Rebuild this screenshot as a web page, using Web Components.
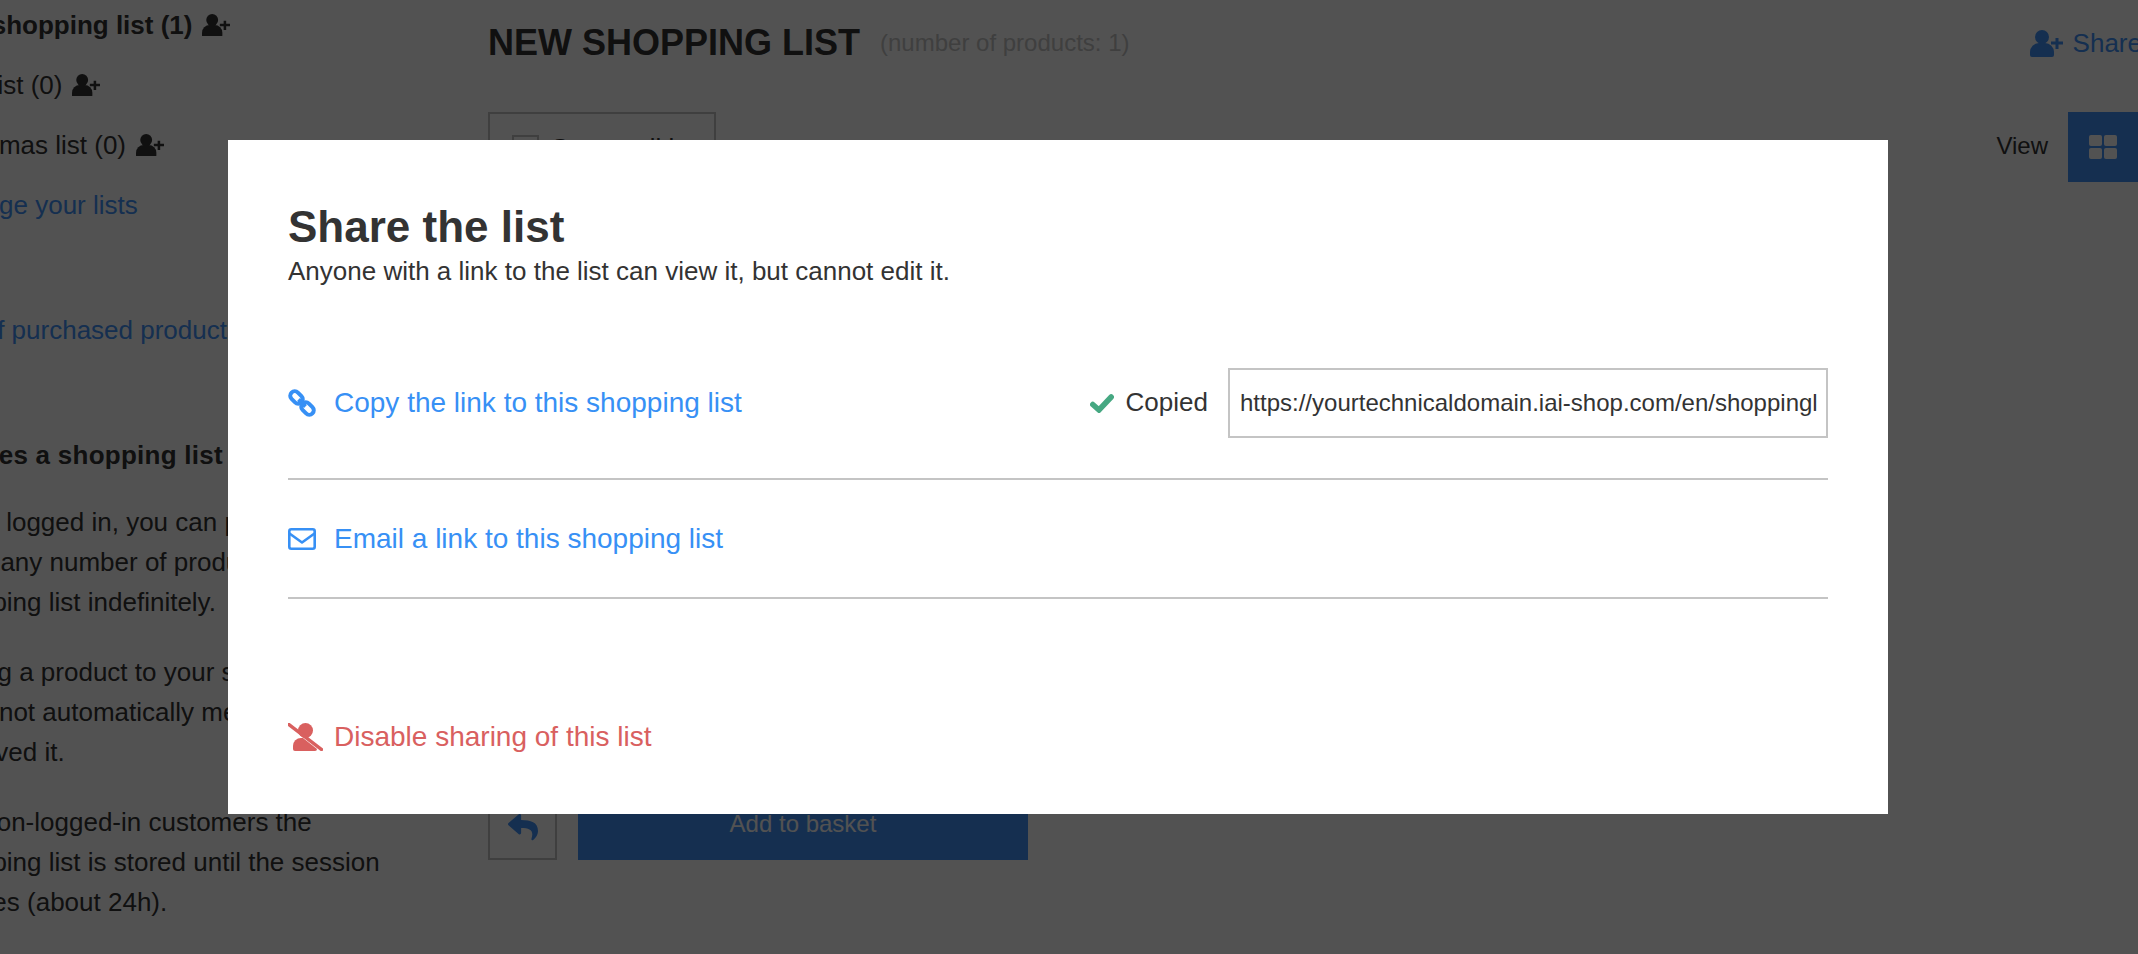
<!DOCTYPE html>
<html lang="en">
<head>
<meta charset="utf-8">
<title>Share the list</title>
<style>
  html, body { margin: 0; height: 100%; overflow: hidden; background: #fff; }
  body {
    display: flex;
    margin-top: -5px;
    height: 959px;
    font-family: "Liberation Sans", Arial, sans-serif;
    font-size: 24px;
    color: #333;
  }
</style>
</head>
<body>
<list-sidebar></list-sidebar>
<list-main></list-main>
<share-dialog>
  <share-action slot="copy" icon="link">Copy the link to this shopping list</share-action>
  <share-action slot="email" icon="mail">Email a link to this shopping list</share-action>
  <share-action slot="disable" icon="unshare" tone="danger">Disable sharing of this list</share-action>
</share-dialog>

<script>
const ICONS = {
  userPlus: `<svg viewBox="0 0 33 27" width="33" height="27"><circle cx="12" cy="7" r="7"/><path d="M0 25v-3a9 9 0 0 1 9-9h6a9 9 0 0 1 9 9v3a2 2 0 0 1-2 2H2a2 2 0 0 1-2-2z"/><path d="M25.500 8h3v3.500H33v3h-4.500V19h-3v-4.500H21v-3h4.500z"/></svg>`,
  link: `<svg viewBox="0 0 28 28" width="28" height="28" fill="none" stroke="currentColor" stroke-width="4"><rect x="1.500" y="4" width="14" height="9" rx="4.500" transform="rotate(45 8.500 8.500)"/><rect x="12.500" y="15" width="14" height="9" rx="4.500" transform="rotate(45 19.500 19.500)"/><path d="M10.500 10.500l7 7"/></svg>`,
  mail: `<svg viewBox="0 0 28 22" width="28" height="22" fill="none" stroke="currentColor" stroke-width="2.600" stroke-linejoin="round"><rect x="1.300" y="1.300" width="25.400" height="19.400" rx="2"/><path d="M1.500 5.500L14 14.500l12.500-9"/></svg>`,
  unshare: `<svg viewBox="0 0 35 28" width="35" height="28"><circle cx="17.500" cy="7.500" r="7.500"/><path d="M5 26v-3a8 8 0 0 1 8-8h2L29 26a2 2 0 0 1-2 2H7a2 2 0 0 1-2-2z"/><path d="M1 1.500L33.500 26.500" stroke="currentColor" stroke-width="3.400" stroke-linecap="square"/></svg>`,
  check: `<svg viewBox="0 0 24 19" width="24" height="19" fill="none" stroke="currentColor" stroke-width="5.500" stroke-linecap="round"><path d="M2.800 10.500L9 16 21.200 3"/></svg>`,
  reply: `<svg viewBox="0 0 512 512" width="30" height="30"><path d="M8.309 189.836L184.313 37.851C199.719 24.546 224 35.347 224 56.015v80.053c160.629 1.839 288 34.032 288 186.258 0 61.441-39.581 122.309-83.333 154.132-13.653 9.931-33.111-2.533-28.077-18.631 45.344-145.012-21.507-183.51-176.59-185.742V360c0 20.700-24.300 31.453-39.687 18.164l-176.004-152c-11.071-9.562-11.086-26.753 0-36.328z"/></svg>`
};

class UiIcon extends HTMLElement {
  constructor() {
    super();
    this.attachShadow({ mode: "open" });
    const name = this.getAttribute("name");
    this.shadowRoot.innerHTML = `
      <style>
        :host { display: inline-flex; flex: none; color: inherit; }
        svg { display: block; fill: currentColor; }
        svg[fill="none"] { fill: none; }
      </style>
      ${ICONS[name]}
    `;
    // optional smaller variant, keeps the ratio of the viewBox
    const width = this.getAttribute("width");
    if (width) {
      const svg = this.shadowRoot.querySelector("svg");
      const box = svg.viewBox.baseVal;
      svg.setAttribute("width", width);
      svg.setAttribute("height", width * box.height / box.width);
    }
  }
}
customElements.define("ui-icon", UiIcon);

class ListSidebar extends HTMLElement {
  constructor() {
    super();
    this.attachShadow({ mode: "open" });
    this.shadowRoot.innerHTML = `
      <style>
        :host {
          display: block;
          flex: none;
          width: 557px;
          margin-left: -69px;
          font-size: 26px;
          line-height: 40px;
          white-space: nowrap;
          color: #333;
        }
        .lists div { display: flex; align-items: center; gap: 10px; height: 60px; }
        .lists .active { font-weight: bold; }
        .lists ui-icon { color: #333; }
        a { color: #4292f8; text-decoration: none; display: block; }
        .manage { height: 60px; line-height: 60px; padding-left: 3px; }
        .bought { margin-top: 65px; height: 60px; line-height: 60px; padding-left: 4px; }
        h3 { font-size: 26px; margin: 0; margin-top: 75px; letter-spacing: .25px; line-height: 40px; color: #333; }
        p { margin: 0; margin-top: 30px; }
        h3 + p { margin-top: 27px; }
        p span { display: block; }
        p span.nudge, p.nudge span { padding-left: 5px; }
      </style>
      <div class="lists">
        <div class="active">New shopping list (1) <ui-icon name="userPlus" width="28"></ui-icon></div>
        <div>Toys list (0) <ui-icon name="userPlus" width="28"></ui-icon></div>
        <div>Christmas list (0) <ui-icon name="userPlus" width="28"></ui-icon></div>
      </div>
      <a class="manage">Manage your lists</a>
      <a class="bought">List of purchased products</a>
      <h3>Creates a shopping list</h3>
      <p>
        <span>When logged in, you can plan</span>
        <span>place any number of products</span>
        <span class="nudge">shopping list indefinitely.</span>
      </p>
      <p>
        <span>Adding a product to your shopping</span>
        <span>Does not automatically mean you</span>
        <span class="nudge">reserved it.</span>
      </p>
      <p class="nudge">
        <span>For non-logged-in customers the</span>
        <span>shopping list is stored until the session</span>
        <span>expires (about 24h).</span>
      </p>
    `;
  }
}
customElements.define("list-sidebar", ListSidebar);

class ListMain extends HTMLElement {
  constructor() {
    super();
    this.attachShadow({ mode: "open" });
    this.shadowRoot.innerHTML = `
      <style>
        :host {
          display: flex;
          flex-direction: column;
          flex: none;
          width: 1650px;
          padding-top: 26px;
          box-sizing: border-box;
          color: #333;
        }
        header { display: flex; align-items: center; height: 44px; }
        h1 { margin: 0; font-size: 36px; line-height: 44px; text-transform: uppercase; }
        .count { margin-left: 20px; color: #c4c4c4; }
        .share {
          display: flex;
          align-items: center;
          gap: 10px;
          margin-left: auto;
          margin-right: -4px;
          font-size: 26px;
          color: #4292f8;
        }
        .filters { display: flex; align-items: flex-start; margin-top: 47px; height: 70px; }
        .select {
          display: flex;
          gap: 11px;
          box-sizing: border-box;
          width: 228px;
          height: 70px;
          padding: 21px 22px;
          border: 2px solid #c4c4c4;
          font-size: 26px;
        }
        .select span:last-child { margin-top: -2px; }
        .check { width: 27px; height: 27px; box-sizing: border-box; border: 2px solid #c4c4c4; flex: none; }
        .view { display: flex; align-items: center; gap: 20px; margin-left: auto; }
        .view span { position: relative; top: -1px; }
        .grid {
          display: grid;
          place-content: center;
          grid-template: 11px 11px / 13px 13px;
          gap: 2px;
          width: 70px;
          height: 70px;
          background: #4292f8;
        }
        .grid i { background: #fff; border-radius: 2px; }
        .actions { display: flex; gap: 21px; margin-top: 608px; }
        .back {
          display: flex;
          justify-content: center;
          padding-top: 20px;
          box-sizing: border-box;
          width: 69px;
          height: 70px;
          border: 2px solid #c4c4c4;
          color: #4292f8;
        }
        .basket {
          display: flex;
          align-items: center;
          justify-content: center;
          box-sizing: border-box;
          width: 450px;
          height: 70px;
          padding-bottom: 2px;
          background: #4292f8;
          color: #fff;
        }
      </style>
      <header>
        <h1>New shopping list</h1>
        <span class="count">(number of products: 1)</span>
        <span class="share"><ui-icon name="userPlus"></ui-icon>Share</span>
      </header>
      <div class="filters">
        <div class="select"><span class="check"></span><span>Commodities</span></div>
        <div class="view"><span>View</span> <div class="grid"><i></i><i></i><i></i><i></i></div></div>
      </div>
      <div class="actions">
        <div class="back"><ui-icon name="reply"></ui-icon></div>
        <div class="basket">Add to basket</div>
      </div>
    `;
  }
}
customElements.define("list-main", ListMain);

class ShareAction extends HTMLElement {
  constructor() {
    super();
    this.attachShadow({ mode: "open" });
    this.shadowRoot.innerHTML = `
      <style>
        :host {
          display: inline-flex;
          align-items: center;
          font-size: 28px;
          line-height: 44px;
          color: #3790f5;
          cursor: pointer;
        }
        :host([tone="danger"]) { color: #d9605f; }
        .icon { display: flex; width: 46px; }
      </style>
      <span class="icon"><ui-icon name="${this.getAttribute("icon")}"></ui-icon></span>
      <slot></slot>
    `;
  }
}
customElements.define("share-action", ShareAction);

class ShareDialog extends HTMLElement {
  constructor() {
    super();
    this.attachShadow({ mode: "open" });
    this.shadowRoot.innerHTML = `
      <style>
        :host { display: block; }
        #backdrop {
          position: fixed;
          inset: 0;
          background: rgba(0, 0, 0, 0.68);
        }
        #modal {
          position: fixed;
          top: 140px;
          left: 228px;
          width: 1660px;
          height: 674px;
          box-sizing: border-box;
          padding: 63px 60px 0;
          background: #fff;
          color: #333;
        }
        h2 { margin: 0; font-size: 44px; line-height: 48px; }
        .lead { margin: 0; font-size: 26px; line-height: 40px; }
        .row { display: flex; align-items: center; border-bottom: 2px solid #c4c4c4; }
        .row.copy { margin-top: 77px; padding-bottom: 40px; }
        .row.email { height: 117px; }
        .status { display: flex; align-items: center; gap: 12px; margin-left: auto; font-size: 26px; color: #333; }
        .status span { position: relative; top: -1px; }
        .status ui-icon { color: #46a882; }
        .url {
          margin-left: 20px;
          box-sizing: border-box;
          width: 600px;
          height: 70px;
          padding: 0 10px;
          border: 2px solid #c4c4c4;
          font-size: 24px;
          line-height: 66px;
          white-space: nowrap;
          overflow: hidden;
        }
        .disable { margin-top: 116px; }
      </style>
      <div id="backdrop"></div>
      <div id="modal" role="dialog">
        <h2>Share the list</h2>
        <p class="lead">Anyone with a link to the list can view it, but cannot edit it.</p>
        <div class="row copy">
          <slot name="copy"></slot>
          <span class="status"><ui-icon name="check"></ui-icon><span>Copied</span></span>
          <div class="url">https://yourtechnicaldomain.iai-shop.com/en/shoppingl</div>
        </div>
        <div class="row email"><slot name="email"></slot></div>
        <div class="disable"><slot name="disable"></slot></div>
      </div>
    `;
  }
}
customElements.define("share-dialog", ShareDialog);
</script>
</body>
</html>
